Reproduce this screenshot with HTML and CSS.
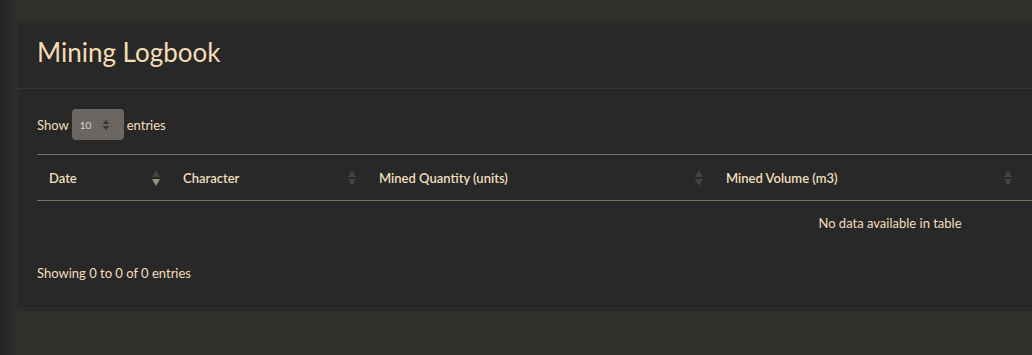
FILE: index.html
```html
<!DOCTYPE html>
<html>
<head>
    <meta charset="utf-8" />
    <title>Mining Logbook</title>
    <link rel="stylesheet" href="styles.css">
</head>
<body>
    <div class="card">
        <div class="card-header">
            <h1>Mining Logbook</h1>
        </div>
        <div class="card-body">
            <div class="length">
                Show
                <span class="select">10
                    <svg width="8" height="12" viewBox="0 0 8 12"><path d="M4 1 L7.5 5 L0.5 5 Z M4 11 L7.5 7 L0.5 7 Z" fill="#3a3835"/></svg>
                </span>
                entries
            </div>
            <table class="log">
                <thead>
                    <tr>
                        <th class="c1">Date <span class="sort active"></span></th>
                        <th class="c2">Character <span class="sort"></span></th>
                        <th class="c3">Mined Quantity (units) <span class="sort"></span></th>
                        <th class="c4">Mined Volume (m3) <span class="sort"></span></th>
                        <th class="c5"><span class="sort"></span></th>
                    </tr>
                </thead>
                <tbody>
                    <tr><td colspan="5" class="empty">No data available in table</td></tr>
                </tbody>
            </table>
            <div class="info">Showing 0 to 0 of 0 entries</div>
        </div>
    </div>
</body>
</html>
```
FILE: styles.css
```css
body {
    margin: 0;
    padding: 22px 0 0 17px;
    height: 355px;
    box-sizing: border-box;
    overflow: hidden;
    font-family: Lato, "Noto Sans", sans-serif;
    color: #f1dfbd;
    background: linear-gradient(to right, #252423 0px, #2d2b29 10px, #312f2c 17px);
}

.card {
    width: 1760px;
    background-color: #282828;
    border: 1px solid #2f2f2f;
    border-radius: 4px;
    box-shadow: 0 1px 2px rgba(0, 0, 0, 0.3);
}

.card-header {
    height: 66px;
    box-sizing: border-box;
    border-bottom: 1px solid #353535;
    padding: 13px 19px 0;
}

h1 {
    margin: 0;
    font-size: 26px;
    font-weight: 400;
    color: #f5deb6;
}

.card-body {
    padding: 20px 19px 27px;
}

.length {
    display: flex;
    align-items: center;
    gap: 3px;
    font-size: 13px;
    height: 31px;
}

.select {
    display: flex;
    align-items: center;
    justify-content: space-between;
    width: 52px;
    height: 31px;
    box-sizing: border-box;
    padding: 0 14px 0 8px;
    background-color: #6b6662;
    border-radius: 4px;
    font-size: 10px;
    color: #d4d4dc;
}

.log {
    margin-top: 14px;
    width: 1706px;
    table-layout: fixed;
    border-collapse: collapse;
    font-size: 13px;
}

.log th {
    text-align: left;
    font-weight: 600;
    height: 45px;
    padding: 0 12px;
    border-top: 1px solid #7d6f62;
    border-bottom: 1px solid #7d6f62;
    position: relative;
}

.c1 { width: 110px; }
.c2 { width: 172px; }
.c3 { width: 323px; }
.c4 { width: 285px; }

.sort {
    position: absolute;
    right: 11px;
    top: 15px;
    width: 0;
    height: 0;
    border-left: 4px solid transparent;
    border-right: 4px solid transparent;
    border-bottom: 7px solid #454340;
}

.sort::after {
    content: "";
    position: absolute;
    left: -4px;
    top: 9px;
    border-left: 4px solid transparent;
    border-right: 4px solid transparent;
    border-top: 7px solid #454340;
}

.sort.active::after {
    border-top-color: #9c9482;
}

.empty {
    text-align: center;
    height: 44px;
    padding: 0;
}

.info {
    margin-top: 20px;
    font-size: 13px;
}
```
